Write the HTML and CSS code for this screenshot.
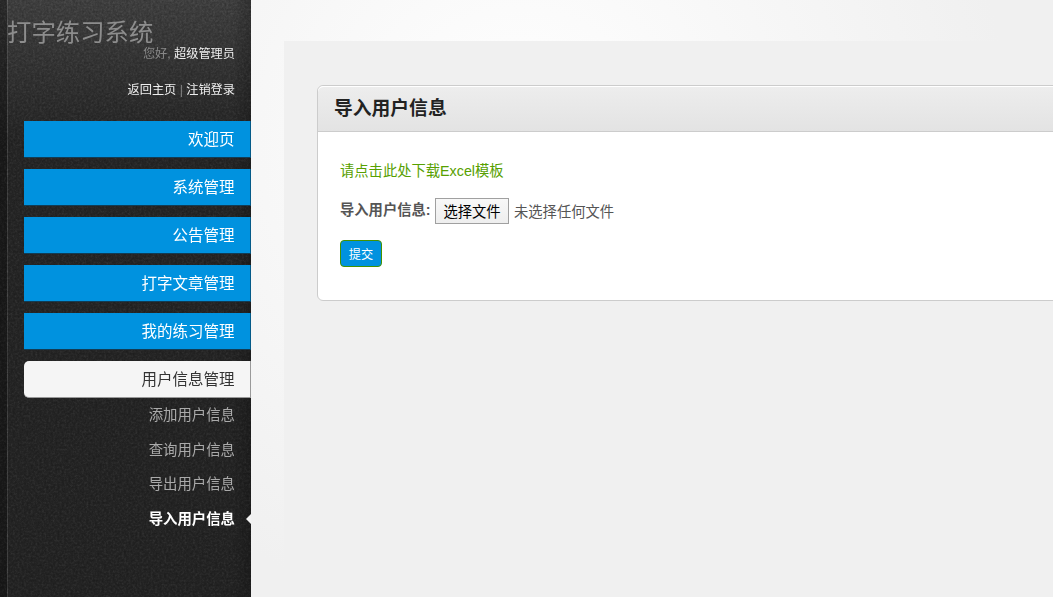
FILE: index.html
```
<!DOCTYPE html>
<html lang="zh-CN">
<head>
    <meta charset="UTF-8">
    <title>打字练习系统</title>
    <link rel="stylesheet" href="styles.css">
</head>
<body>
    <div class="sidebar">
        <svg class="grain" width="251" height="597">
            <filter id="noise" x="0" y="0" width="100%" height="100%" color-interpolation-filters="sRGB">
                <feTurbulence type="fractalNoise" baseFrequency="0.45" numOctaves="3" seed="4"/>
                <feColorMatrix type="matrix" values="1 0 0 0 0  1 0 0 0 0  1 0 0 0 0  0 0 0 0 1"/>
            </filter>
            <rect width="251" height="597" filter="url(#noise)"/>
        </svg>
        <h1 class="title">打字练习系统</h1>
        <div class="profile">
            <p>您好, <a href="#">超级管理员</a></p>
            <p><a href="#">返回主页</a> | <a href="#">注销登录</a></p>
        </div>
        <ul class="main-nav">
            <li><a href="#" class="nav-item">欢迎页</a></li>
            <li><a href="#" class="nav-item">系统管理</a></li>
            <li><a href="#" class="nav-item">公告管理</a></li>
            <li><a href="#" class="nav-item">打字文章管理</a></li>
            <li><a href="#" class="nav-item">我的练习管理</a></li>
            <li>
                <a href="#" class="nav-item current">用户信息管理</a>
                <ul class="sub-nav">
                    <li><a href="#">添加用户信息</a></li>
                    <li><a href="#">查询用户信息</a></li>
                    <li><a href="#">导出用户信息</a></li>
                    <li><a href="#" class="current">导入用户信息</a></li>
                </ul>
            </li>
        </ul>
    </div>
    <div class="main">
        <div class="frame">
            <div class="content-box">
                <div class="content-box-header">
                    <h3>导入用户信息</h3>
                </div>
                <div class="content-box-content">
                    <a href="#" class="download">请点击此处下载Excel模板</a>
                    <div class="file-row">
                        <label>导入用户信息:</label>
                        <button class="choose" type="button">选择文件</button>
                        <span class="file-name">未选择任何文件</span>
                    </div>
                    <button class="submit" type="submit">提交</button>
                </div>
            </div>
        </div>
    </div>
</body>
</html>
```
FILE: styles.css
```
* {
    box-sizing: border-box;
}
body {
    margin: 0;
    display: flex;
    height: 597px;
    overflow: hidden;
    font-family: "Liberation Sans", "Noto Sans CJK SC", sans-serif;
    color: #555;
    background: #f0f0f0;
}
a {
    text-decoration: none;
}
ul {
    list-style: none;
    margin: 0;
    padding: 0;
}

/* sidebar */
.sidebar {
    position: relative;
    flex: none;
    width: 251px;
    height: 597px;
    padding-top: 15px;
    isolation: isolate;
    background:
        linear-gradient(to right, rgba(0,0,0,.32) 7px, rgba(255,255,255,.12) 7px, rgba(255,255,255,.12) 8px, transparent 8px, transparent 232px, rgba(0,0,0,.2)),
        linear-gradient(#3e3e3e, #252525 140px, #232323);
}
.grain {
    position: absolute;
    top: 0;
    left: 0;
    z-index: -1;
    mix-blend-mode: soft-light;
    opacity: .3;
}
.title {
    margin: 0;
    padding-left: 7px;
    font-size: 24.4px;
    font-weight: normal;
    line-height: 36px;
    height: 30px;
    color: #8d8d8d;
}
.profile {
    padding-right: 16px;
    text-align: right;
    font-size: 12.2px;
    color: #888;
}
.profile p {
    margin: 0;
    height: 36px;
    line-height: 18px;
}
.profile a {
    color: #eee;
}
.main-nav {
    padding: 4px 0 0 24px;
    text-align: right;
}
.nav-item {
    display: block;
    height: 37px;
    margin-bottom: 11px;
    padding-right: 15.5px;
    font-size: 15.5px;
    line-height: 37px;
    color: #fff;
    background: #0092df;
    border-right: 1px solid #045a88;
    border-bottom: 1px solid #123c54;
}
.nav-item.current {
    margin-bottom: 0;
    color: #333;
    background: #f5f5f5;
    border-color: #999;
    border-radius: 5px 0 0 5px;
}
.sub-nav a {
    position: relative;
    display: block;
    height: 34.6px;
    padding-right: 16px;
    font-size: 14.4px;
    line-height: 34px;
    color: #aaa;
}
.sub-nav .current {
    color: #fff;
    font-weight: bold;
}
.sub-nav .current::after {
    content: "";
    position: absolute;
    right: 0;
    top: 12px;
    border: 5px solid transparent;
    border-right-color: #f3f3f3;
    border-left: 0;
}

/* content */
.main {
    flex: 1;
    padding: 41px 0 0 33px;
    background: radial-gradient(circle 490px at 269px 140px, #fcfcfc 20%, #f0f0f0);
}
.frame {
    height: 556px;
    padding: 44px 0 0 33px;
    background: #f0f0f0;
}
.content-box {
    width: 760px;
    height: 216px;
    border: 1px solid #ccc;
    border-radius: 6px;
    background: #fff;
}
.content-box-header {
    height: 46px;
    border-top: 1px solid #fff;
    border-bottom: 1px solid #ccc;
    border-radius: 6px 6px 0 0;
    background: linear-gradient(#ededed, #e3e3e3);
}
.content-box-header h3 {
    margin: 0;
    padding-left: 16px;
    font-size: 18.8px;
    line-height: 44px;
    color: #222;
}
.content-box-content {
    padding: 28px 22px;
    font-size: 14.3px;
}
.download {
    display: block;
    height: 38px;
    line-height: 22px;
    color: #57a000;
}
.file-row {
    display: flex;
    height: 26px;
    line-height: 26px;
}
.file-row label {
    width: 95px;
    line-height: 24px;
    font-weight: bold;
}
.choose {
    width: 74px;
    height: 26px;
    padding: 0;
    border: 1px solid #a0a0a0;
    background: linear-gradient(#f8f8f8, #eee);
    font: inherit;
    color: #000;
}
.file-name {
    padding-left: 5px;
    line-height: 28px;
}
.submit {
    display: block;
    width: 42px;
    height: 27px;
    margin-top: 16px;
    padding: 0;
    border: 1px solid #459300;
    border-radius: 4px;
    background: #0092df;
    font-family: inherit;
    font-size: 12.2px;
    color: #fff;
}
```
